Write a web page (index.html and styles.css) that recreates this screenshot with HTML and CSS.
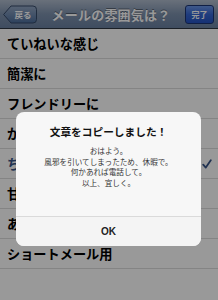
FILE: index.html
```html
<!DOCTYPE html>
<html lang="ja">
<head>
<meta charset="utf-8">
<link rel="stylesheet" href="styles.css">
</head>
<body>
<div class="screen">
  <header class="navbar">
    <svg class="back" width="34" height="19" viewBox="0 0 34 19">
      <defs>
        <linearGradient id="bg1" x1="0" y1="0" x2="0" y2="1">
          <stop offset="0" stop-color="#93a6c2"/>
          <stop offset="1" stop-color="#4d6e9c"/>
        </linearGradient>
      </defs>
      <path d="M0.6 9.5 L8 1 H30 A3.5 3.5 0 0 1 33.5 4.5 V14.5 A3.5 3.5 0 0 1 30 18 H8 Z" fill="url(#bg1)" stroke="#364b6a" stroke-width="1"/>
      <text x="20" y="13" text-anchor="middle" class="back-text">戻る</text>
    </svg>
    <h1 class="title">メールの雰囲気は？</h1>
    <div class="done">完了</div>
  </header>
  <ul class="list">
    <li class="row">ていねいな感じ</li>
    <li class="row">簡潔に</li>
    <li class="row">フレンドリーに</li>
    <li class="row">か</li>
    <li class="row checked"><span>ち</span>
      <svg class="check" width="10" height="10" viewBox="0 0 10 10"><path d="M1.2 5.6 L3.8 8.6 L8.8 1.2" fill="none" stroke="#385487" stroke-width="1.8" stroke-linecap="round" stroke-linejoin="round"/></svg>
    </li>
    <li class="row">甘</li>
    <li class="row">あ</li>
    <li class="row">ショートメール用</li>
  </ul>
  <div class="overlay"></div>
  <div class="alert">
    <div class="alert-body">
      <div class="alert-title">文章をコピーしました！</div>
      <div class="alert-msg">
        <p>おはよう。</p>
        <p>風邪を引いてしまったため、休暇で。</p>
        <p>何かあれば電話して。</p>
        <p>以上、宜しく。</p>
      </div>
    </div>
    <div class="alert-btn">OK</div>
  </div>
</div>
</body>
</html>
```

FILE: styles.css
```css
* { box-sizing: border-box; }
html, body { margin: 0; padding: 0; }
body {
  width: 218px;
  height: 300px;
  overflow: hidden;
  background: #ffffff;
  font-family: "Noto Sans CJK JP", "Noto Sans", sans-serif;
}
.screen {
  position: relative;
  width: 218px;
  height: 300px;
  display: flex;
  flex-direction: column;
}
.navbar {
  height: 29px;
  flex: none;
  display: flex;
  align-items: center;
  padding: 0 4px 0 3px;
  background: linear-gradient(#b0bccd, #7d91ad 50%, #6a80a0);
  border-bottom: 1px solid #2d3642;
}
.back { display: block; flex: none; }
.back-text {
  font-family: "Noto Sans CJK JP", sans-serif;
  font-size: 8.5px;
  font-weight: 700;
  fill: #ffffff;
}
.title {
  flex: 1;
  margin: 0;
  text-align: center;
  font-size: 13px;
  font-weight: 700;
  color: #ffffff;
  line-height: 29px;
  letter-spacing: 0.2px;
  text-shadow: 0 -1px 0 rgba(0,0,0,0.4);
}
.done {
  flex: none;
  width: 29px;
  height: 19px;
  border-radius: 3px;
  border: 1px solid #1c3574;
  background: linear-gradient(#6a94e6, #3465d2 50%, #2553c2);
  color: #ffffff;
  font-size: 8px;
  font-weight: 700;
  display: flex;
  align-items: center;
  justify-content: center;
}
.list {
  list-style: none;
  margin: 0;
  padding: 0;
}
.row {
  height: 30px;
  display: flex;
  align-items: center;
  justify-content: space-between;
  padding: 0 6px 0 7px;
  border-bottom: 1px solid #dcdcdc;
  font-size: 13.2px;
  font-weight: 700;
  color: #000000;
  white-space: nowrap;
}
.checked { color: #385487; }
.check { display: block; flex: none; }
.overlay {
  position: absolute;
  inset: 0;
  background: rgba(0,0,0,0.4);
}
.alert {
  position: absolute;
  left: 16px;
  top: 112px;
  width: 185px;
  height: 134px;
  border-radius: 8px;
  background: #f7f7f7;
  display: flex;
  flex-direction: column;
  overflow: hidden;
}
.alert-body {
  flex: 1;
  padding-top: 13px;
  text-align: center;
}
.alert-title {
  font-size: 10.7px;
  font-weight: 700;
  line-height: 13px;
  color: #111111;
}
.alert-msg {
  margin-top: 8px;
  font-size: 7.6px;
  line-height: 10.5px;
  color: #333333;
}
.alert-msg p { margin: 0; }
.alert-btn {
  height: 30px;
  flex: none;
  border-top: 1px solid #dadada;
  background: #f4f4f4;
  display: flex;
  align-items: center;
  justify-content: center;
  font-family: "Liberation Sans", sans-serif;
  font-size: 10px;
  font-weight: 700;
  color: #222222;
}
```
